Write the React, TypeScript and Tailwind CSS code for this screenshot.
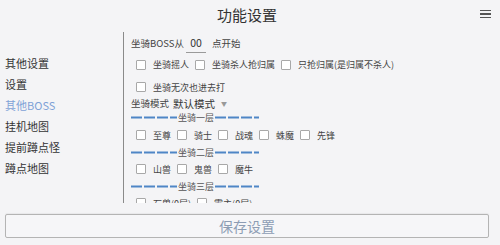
import React from "react";

const font = { fontFamily: '"Noto Sans CJK SC", "Noto Sans", sans-serif' };

function Box() {
  return <span className="inline-block w-[10px] h-[10px] border border-[#a8a8a8] bg-white rounded-[1px] shrink-0" />;
}

function Check({ label, gap = "mr-[6px]" }: { label: string; gap?: string }) {
  return (
    <span className={`flex items-center ${gap}`}>
      <Box />
      <span className="ml-[7px] text-[9px] leading-none text-[#444] whitespace-nowrap">{label}</span>
    </span>
  );
}

function Dashes({ w }: { w: number }) {
  return (
    <svg width={w} height="3" className="shrink-0">
      <line x1="0" y1="1.5" x2={w} y2="1.5" stroke="#4f86c6" strokeWidth="2" strokeDasharray="11 2" />
    </svg>
  );
}

function Divider({ label, h }: { label: string; h: string }) {
  return (
    <div className={`flex items-center ${h}`}>
      <Dashes w={46} />
      <span className="text-[9px] leading-none text-[#555] px-[1px]">{label}</span>
      <Dashes w={44} />
    </div>
  );
}

export default function App() {
  const nav = ["其他设置", "设置", "其他BOSS", "挂机地图", "提前蹲点怪", "蹲点地图"];
  return (
    <div className="w-[500px] h-[245px] bg-[#f4f4f6] flex flex-col overflow-hidden" style={font}>
      <div className="h-[28px] grid grid-cols-[1fr_auto_1fr] items-center">
        <div />
        <div className="text-[15px] leading-none text-[#333] pr-[6px]">功能设置</div>
        <div className="flex justify-end pr-[9px]">
          <div className="flex flex-col gap-[2px] w-[11px]">
            <span className="h-[1.5px] bg-[#555]" />
            <span className="h-[1.5px] bg-[#555]" />
            <span className="h-[1.5px] bg-[#555]" />
          </div>
        </div>
      </div>
      <div className="flex h-[185px]">
        <div className="w-[123px] pt-[25px] pl-[5px] flex flex-col">
          {nav.map((n) => (
            <div
              key={n}
              className={`h-[21px] flex items-center text-[11px] leading-none ${n === "其他BOSS" ? "text-[#7fa2d6]" : "text-[#333]"}`}
            >
              {n}
            </div>
          ))}
        </div>
        <div className="mt-[4px] h-[171px] w-[360px] border-l border-[#8a8a8a] overflow-hidden pl-[7px]">
          <div className="h-[24px] flex items-center text-[9.5px] leading-none text-[#444]">
            <span>坐骑BOSS从</span>
            <span className="ml-[2px] w-[20px] h-[18px] flex items-center justify-center border-b border-[#9a9a9a] text-[10.5px] text-[#333]">
              00
            </span>
            <span className="ml-[6px]">点开始</span>
          </div>
          <div className="h-[17px] flex items-center pl-[5px]">
            <Check label="坐骑摇人" />
            <Check label="坐骑杀人抢归属" />
            <Check label="只抢归属(是归属不杀人)" />
          </div>
          <div className="h-[25px] pt-[3px] flex items-center pl-[5px]">
            <Check label="坐骑无次也进去打" />
          </div>
          <div className="h-[12px] flex items-center text-[9.5px] leading-none text-[#444]">
            <span>坐骑模式</span>
            <span className="ml-[4px] text-[10.5px] text-[#333]">默认模式</span>
            <span className="ml-[6px] text-[6px] text-[#999]">▼</span>
          </div>
          <Divider label="坐骑一层" h="h-[14px]" />
          <div className="h-[22px] flex items-center pl-[5px]">
            <Check label="至尊" />
            <Check label="骑士" />
            <Check label="战魂" />
            <Check label="蛛魔" />
            <Check label="先锋" />
          </div>
          <Divider label="坐骑二层" h="h-[12px]" />
          <div className="h-[22px] flex items-center pl-[5px]">
            <Check label="山兽" />
            <Check label="鬼兽" />
            <Check label="魔牛" />
          </div>
          <Divider label="坐骑三层" h="h-[12px]" />
          <div className="h-[22px] flex items-center pl-[5px]">
            <Check label="石兽(0层)" />
            <Check label="霸主(0层)" />
          </div>
        </div>
      </div>
      <div className="mt-[1px] ml-[5px] mr-[11px] h-[24px] border border-[#b4b4b4] rounded-[2px] bg-[#f6f6f8] shadow-[0_-1px_1px_rgba(0,0,0,0.05)] flex items-center justify-center">
        <span className="text-[14px] leading-none text-[#8d9db4]">保存设置</span>
      </div>
    </div>
  );
}
